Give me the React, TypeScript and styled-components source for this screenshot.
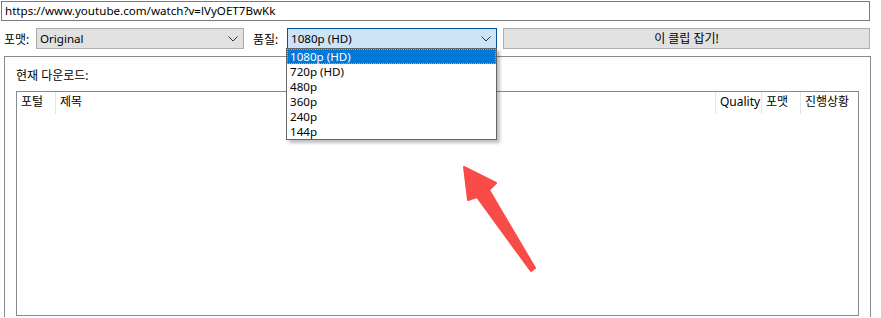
import styled, { createGlobalStyle } from "styled-components";

const GlobalStyle = createGlobalStyle`
    html, body {
        margin: 0;
        padding: 0;
        background: #ffffff;
        overflow: hidden;
    }
    body {
        font-family: "Noto Sans", "Noto Sans CJK KR", sans-serif;
        font-size: 11.6px;
        color: #000;
    }
`;

const Page = styled.div`
    position: relative;
    width: 881px;
    height: 318px;
    padding: 1px 0 0 1px;
    box-sizing: border-box;
    overflow: hidden;
`;

const UrlInput = styled.div`
    width: 869px;
    height: 20px;
    box-sizing: border-box;
    border: 1px solid #7a7a7a;
    padding: 0 3px;
    line-height: 18px;
    white-space: nowrap;
`;

const ControlRow = styled.div`
    display: flex;
    align-items: center;
    height: 21px;
    margin-top: 7px;
    padding-left: 3px;
`;

const Label = styled.span<{ $width: number; $offset?: number }>`
    width: ${p => p.$width}px;
    margin-left: ${p => p.$offset ?? 0}px;
    flex-shrink: 0;
    white-space: nowrap;
    font-size: 12px;
`;

const Combo = styled.div<{ $width: number; $focused?: boolean }>`
    position: relative;
    width: ${p => p.$width}px;
    height: 21px;
    box-sizing: border-box;
    display: flex;
    align-items: center;
    padding-left: 3px;
    background: ${p => p.$focused ? "#cce4f7" : "#e1e1e1"};
    border: 1px solid ${p => p.$focused ? "#005499" : "#adadad"};
    svg.chev {
        position: absolute;
        right: 5px;
        top: 7px;
    }
`;

const DropList = styled.div`
    position: absolute;
    left: -2px;
    top: 19px;
    width: 211px;
    box-sizing: border-box;
    background: #fff;
    border: 1px solid #646464;
    box-shadow: 3px 3px 3px rgba(0, 0, 0, 0.25);
    z-index: 2;
`;

const DropItem = styled.div<{ $selected?: boolean }>`
    height: 15px;
    line-height: 13px;
    padding-left: 2px;
    box-sizing: border-box;
    border: 1px ${p => p.$selected ? "dotted #f39a36" : "solid transparent"};
    background: ${p => p.$selected ? "#0078d7" : "transparent"};
    color: ${p => p.$selected ? "#fff" : "#000"};
`;

const GrabButton = styled.div`
    margin-left: 6px;
    width: 367px;
    height: 21px;
    box-sizing: border-box;
    border: 1px solid #adadad;
    background: #e1e1e1;
    text-align: center;
    line-height: 19px;
    font-size: 12px;
`;

const Panel = styled.div`
    margin: 7px 0 0 3px;
    width: 867px;
    height: 261px;
    box-sizing: border-box;
    border: 1px solid #888a90;
    border-bottom: none;
    padding: 11px 11px 0 11px;
`;

const PanelTitle = styled.div`
    height: 23px;
    line-height: 16px;
    font-size: 12px;
`;

const ListView = styled.div`
    width: 843px;
    height: 225px;
    box-sizing: border-box;
    border: 1px solid #888a90;
`;

const Header = styled.div`
    display: flex;
    height: 22px;
    font-size: 12px;
`;

const HeaderCell = styled.div<{ $width?: number }>`
    ${p => p.$width ? `width: ${p.$width}px;` : "flex: 1;"}
    flex-shrink: 0;
    box-sizing: border-box;
    padding: 0 4px 0 4px;
    line-height: 20px;
    border-right: 1px solid #e5e5e5;
    white-space: nowrap;
    &:last-child { border-right: none; }
`;

const Arrow = styled.svg`
    position: absolute;
    left: 0;
    top: 0;
    pointer-events: none;
`;

const qualities = ["1080p (HD)", "720p (HD)", "480p", "360p", "240p", "144p"];

const Chevron = () => (
    <svg className="chev" width="10" height="6" viewBox="0 0 10 6">
        <path d="M0.5 0.5 L5 5 L9.5 0.5" fill="none" stroke="#333" strokeWidth="1" />
    </svg>
);

export default function App() {
    return <Page>
        <GlobalStyle />
        <UrlInput>https://www.youtube.com/watch?v=lVyOET7BwKk</UrlInput>
        <ControlRow>
            <Label $width={32}>포맷:</Label>
            <Combo $width={208}>Original<Chevron /></Combo>
            <Label $width={34} $offset={9}>품질:</Label>
            <Combo $width={210} $focused>
                1080p (HD)<Chevron />
                <DropList>
                    {qualities.map((q, i) => <DropItem key={q} $selected={i === 0}>{q}</DropItem>)}
                </DropList>
            </Combo>
            <GrabButton>이 클립 잡기!</GrabButton>
        </ControlRow>
        <Panel>
            <PanelTitle>현재 다운로드:</PanelTitle>
            <ListView>
                <Header>
                    <HeaderCell $width={39}>포털</HeaderCell>
                    <HeaderCell>제목</HeaderCell>
                    <HeaderCell $width={46}>Quality</HeaderCell>
                    <HeaderCell $width={39}>포맷</HeaderCell>
                    <HeaderCell $width={57}>진행상황</HeaderCell>
                </Header>
            </ListView>
        </Panel>
        <Arrow width="881" height="318" viewBox="0 0 881 318">
            <polygon
                points="464,167 496,183 489,190 535,268 531,271 477,197 468,200"
                fill="#f84c48" stroke="#f84c48" strokeWidth="2" strokeLinejoin="round" />
        </Arrow>
    </Page>
}
